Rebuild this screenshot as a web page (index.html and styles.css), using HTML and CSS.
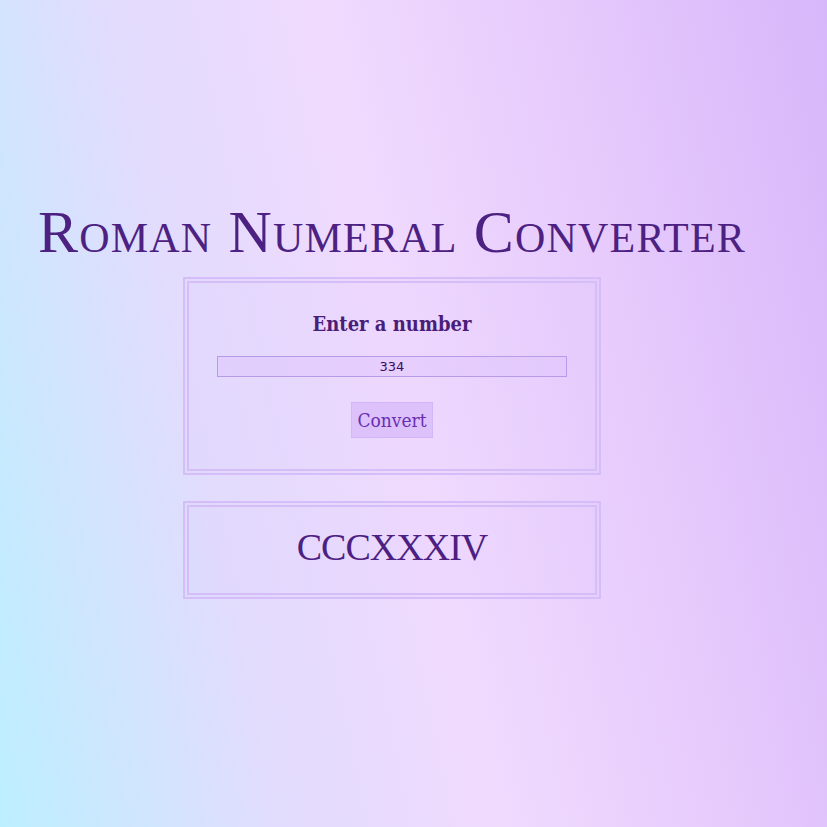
FILE: index.html
```html
<!DOCTYPE html>
<html lang="en">
<head>
<meta charset="utf-8">
<title>Roman Numeral Converter</title>
<link rel="stylesheet" href="styles.css">
</head>
<body>
<main class="page">
  <h1 class="title">Roman Numeral Converter</h1>
  <form class="card card-form">
    <label class="label" for="number">Enter a number</label>
    <input class="number-input" id="number" type="text" value="334">
    <button class="convert-btn" type="button">Convert</button>
  </form>
  <section class="card card-output">
    <p class="output">CCCXXXIV</p>
  </section>
</main>
</body>
</html>
```
FILE: styles.css
```css
html {
  height: 100%;
  background: linear-gradient(78deg, #bcefff 0%, #e2dcfd 28%, #f0dafe 50%, #e5c9fc 75%, #d8b6fa 100%);
}
body {
  margin: 0;
  min-height: 827px;
}
.page {
  width: 784px;
  display: flex;
  flex-direction: column;
  align-items: center;
  padding-top: 202px;
}
.title {
  margin: 0;
  font-family: "Liberation Serif", serif;
  font-variant: small-caps;
  font-weight: 400;
  font-size: 60px;
  line-height: 60px;
  letter-spacing: 1.2px;
  color: #4d2182;
  white-space: nowrap;
}
.card {
  box-sizing: border-box;
  width: 418px;
  border: 6px double #d5bdf8;
  background: rgba(214, 190, 250, 0.08);
}
.card-form {
  margin-top: 15px;
  display: flex;
  flex-direction: column;
  align-items: center;
  padding: 29px 0 31px;
}
.label {
  font-family: "DejaVu Serif Condensed", "DejaVu Serif", serif;
  font-weight: 700;
  font-size: 20px;
  line-height: 24px;
  color: #4a1e78;
}
.number-input {
  box-sizing: border-box;
  margin-top: 20px;
  width: 350px;
  height: 21px;
  padding: 0;
  border: 1px solid #b89be8;
  background: rgba(222, 195, 252, 0.45);
  font-family: "DejaVu Sans", sans-serif;
  font-size: 13px;
  color: #3a0c62;
  text-align: center;
  outline: none;
}
.convert-btn {
  margin-top: 25px;
  padding: 5px 5px;
  border: 1px solid #d4b6f8;
  background: #dcc1fb;
  font-family: "DejaVu Serif Condensed", "DejaVu Serif", serif;
  font-size: 19px;
  line-height: 24px;
  color: #6a2eb2;
}
.card-output {
  margin-top: 26px;
  padding: 21px 0 27px;
  text-align: center;
}
.output {
  margin: 0;
  font-family: "Liberation Serif", serif;
  font-size: 38px;
  line-height: 38px;
  letter-spacing: -1px;
  color: #4c2082;
}
```
